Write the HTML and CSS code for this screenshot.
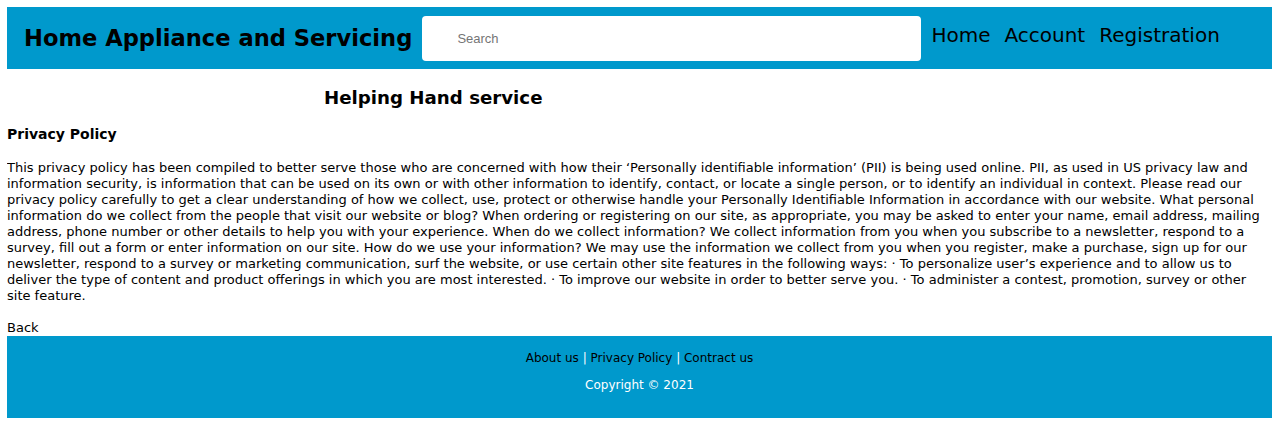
FILE: index.html
```html
<!DOCTYPE html>
<html>
<head>
<meta charset="utf-8">
<title>Privacy Policy</title>
<link rel="stylesheet" href="styles.css">
</head>
<body>
<header class="topbar">
  <h1 class="brand">Home Appliance and Servicing</h1>
  <input class="search" type="text" placeholder="Search">
  <nav class="nav">
    <a href="#">Home</a>
    <a href="#">Account</a>
    <a href="#">Registration</a>
  </nav>
</header>
<main class="content">
  <h2 class="service">Helping Hand service</h2>
  <h3 class="policy-title">Privacy Policy</h3>
  <p class="policy-text">This privacy policy has been compiled to better serve those who are concerned with how their ‘Personally identifiable information’ (PII) is being used online. PII, as used in US privacy law and information security, is information that can be used on its own or with other information to identify, contact, or locate a single person, or to identify an individual in context. Please read our privacy policy carefully to get a clear understanding of how we collect, use, protect or otherwise handle your Personally Identifiable Information in accordance with our website. What personal information do we collect from the people that visit our website or blog? When ordering or registering on our site, as appropriate, you may be asked to enter your name, email address, mailing address, phone number or other details to help you with your experience. When do we collect information? We collect information from you when you subscribe to a newsletter, respond to a survey, fill out a form or enter information on our site. How do we use your information? We may use the information we collect from you when you register, make a purchase, sign up for our newsletter, respond to a survey or marketing communication, surf the website, or use certain other site features in the following ways: · To personalize user’s experience and to allow us to deliver the type of content and product offerings in which you are most interested. · To improve our website in order to better serve you. · To administer a contest, promotion, survey or other site feature.</p>
  <a class="back" href="#">Back</a>
</main>
<footer class="footer">
  <div class="footer-links"><a href="#">About us</a> | <a href="#">Privacy Policy</a> | <a href="#">Contract us</a></div>
  <div class="copyright">Copyright © 2021</div>
</footer>
</body>
</html>
```
FILE: styles.css
```css
body {
  margin: 7px;
  font-family: "DejaVu Sans", Verdana, sans-serif;
  font-size: 13px;
  color: #000;
}
.topbar {
  background: #0099cc;
  height: 62px;
  display: flex;
  align-items: center;
}
.brand {
  margin: 0 0 0 17px;
  font-size: 22.6px;
  font-weight: bold;
  color: #000;
  white-space: nowrap;
}
.search {
  margin-left: 10px;
  width: 499px;
  height: 45px;
  box-sizing: border-box;
  border: none;
  border-radius: 4px;
  padding: 0 0 0 35px;
  font-family: "Liberation Sans", Arial, sans-serif;
  font-size: 13px;
  background: #fff;
}
.search::placeholder {
  color: #757575;
}
.nav {
  margin-left: 10px;
  display: flex;
  gap: 14px;
  margin-top: -6px;
}
.nav a {
  color: #000;
  text-decoration: none;
  font-size: 20px;
}
.content {
  padding-top: 17px;
}
.service {
  margin: 0 0 0 317px;
  font-size: 18.2px;
  font-weight: bold;
  line-height: 24px;
}
.policy-title {
  margin: 14px 0 0 0;
  font-size: 14px;
  font-weight: bold;
  line-height: 20px;
}
.policy-text {
  margin: 16px 0 16px 0;
  line-height: 16px;
}
.back {
  display: block;
  color: #000;
  text-decoration: none;
  line-height: 16px;
}
.footer {
  margin-top: 0;
  background: #0099cc;
  height: 82px;
  box-sizing: border-box;
  padding-top: 14px;
  text-align: center;
  font-size: 12px;
}
.footer-links {
  color: #fff;
  line-height: 16px;
}
.footer-links a {
  color: #000;
  text-decoration: none;
}
.copyright {
  margin-top: 11px;
  color: #fff;
  line-height: 16px;
}
```
